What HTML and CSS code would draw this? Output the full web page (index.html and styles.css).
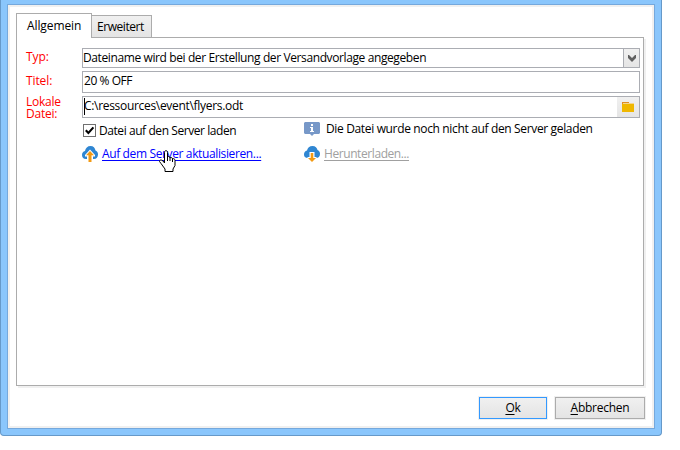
FILE: index.html
```
<!DOCTYPE html>
<html lang="de">
<head><meta charset="utf-8"><title>Datei</title><link rel="stylesheet" href="styles.css"></head>
<body>
<main class="window">
  <div class="client">
    <nav class="tabs">
      <span class="tab active">Allgemein</span>
      <span class="tab">Erweitert</span>
    </nav>
    <section class="panel">
      <div class="row row-type">
        <label class="label">Typ:</label>
        <div class="field select"><span class="type-text">Dateiname wird bei der Erstellung der Versandvorlage angegeben</span>
          <span class="drop"><svg width="8" height="7" viewBox="0 0 8 7"><path d="M0 0h1l3 3 3-3h1v3L4 7 0 3z" fill="#606060"/></svg></span>
        </div>
      </div>
      <div class="row row-title">
        <label class="label">Titel:</label>
        <div class="field"><span class="title-text">20 % OFF</span></div>
      </div>
      <div class="row row-file">
        <label class="label two">Lokale Datei:</label>
        <div class="field file"><i class="caret"></i><span class="path-text">C:\ressources\event\flyers.odt</span>
          <span class="browse"><svg width="13" height="12" viewBox="0 0 13 12"><path d="M0 1h7v2H0z" fill="#df8e27"/><path d="M1 2h11v2H1z" fill="#f5d58c"/><path d="M0 3h12v8H0z" fill="#efb700"/></svg></span>
        </div>
      </div>
      <div class="options">
        <div class="option"><span class="check"><svg width="11" height="11" viewBox="0 0 11 11"><path d="M1.800 5.200L4.400 8 9.400 2.400" fill="none" stroke="#000" stroke-width="2.100"/></svg></span><span class="load-text">Datei auf den Server laden</span></div>
        <div class="option info"><svg width="16" height="14" viewBox="0 0 16 14"><path d="M1 0h14l1 1v10l-1 1h-5l-2 2-2-2H1l-1-1V1z" fill="#7798c8"/><path d="M7 2h2v2H7zM6 5h3v4h1v1H6V9h1V6H6z" fill="#fff"/></svg><span class="info-text">Die Datei wurde noch nicht auf den Server geladen</span></div>
        <div class="option link-row"><svg width="16" height="16" viewBox="0 0 16 16"><path d="M4 13C1 13 0 11 0 9c0-2 1-3.500 3-4C3.500 2 5.500 0 8.500 0c3 0 4.500 2 5 4.500C15.500 5 16 7 16 8.500c0 2.500-1.500 4.500-4 4.500z" fill="#2f86d2"/><path d="M8 3.500L13 9v1.500h-2V14H5v-3.500H3V9z" fill="#fff"/><path d="M8 5l4 4.200H9.500V16h-3V9.200H4z" fill="#f39a13"/></svg><a class="update-text">Auf dem Server aktualisieren...</a></div>
        <div class="option link-row disabled"><svg width="16" height="16" viewBox="0 0 16 16"><path d="M4 12C1 12 0 10.500 0 8.500c0-2 1-3.500 3-4C3.500 2 5.500 0 8.500 0c3 0 4.500 2 5 4C15.500 4.500 16 6.500 16 8c0 2.500-1.500 4-4 4z" fill="#2f86d2"/><path d="M5.500 6h5v5h2v2L8 16l-4.500-3v-2h2z" fill="#fff"/><path d="M6.700 7h2.600v5H12l-4 4-4-4h2.700z" fill="#f39a13"/></svg><a class="download-text">Herunterladen...</a></div>
      </div>
    </section>
    <footer class="actions">
      <button class="button ok"><u>O</u>k</button>
      <button class="button cancel"><u>A</u>bbrechen</button>
    </footer>
  </div>
</main>
<svg class="cursor" width="17" height="22" viewBox="0 0 17 22"><path d="M5.500 13V2.500c0-2.500 3-2.500 3 0V7c1-1 2.500-.5 2.500 1 1-1 2.500-.5 2.500 1 1-.8 2.500-.2 2.500 1.500v5L14 19v2.500H6V19l-4-5.500-1.500-2c0-1.800 2-2 3.500-.5z" fill="#fff" stroke="#000"/><path d="M8.500 6v5M11 7.500V11M13.500 9v3" stroke="#000"/></svg>
</body>
</html>
```
FILE: styles.css
```
* { box-sizing: border-box; }
body { margin: 0; background: #fff; font: 12px/16px "Open Sans", sans-serif; color: #000; height: 450px; overflow: hidden; position: relative; }
svg { display: block; flex: none; }
.window { width: 662px; height: 436px; background: #8ac6fc; border: 1px solid #6699c9; border-top: 0; border-radius: 0 0 4px 4px; padding: 4px 6px 6px; }
.client { height: 425px; border: 1px solid #75a8dc; background: #fff; box-shadow: inset 0 0 0 2px #f0f0f0; padding: 8px 10px 0 8px; display: flex; flex-direction: column; }
.tabs { display: flex; align-items: flex-end; height: 25px; position: relative; z-index: 1; }
.tab { height: 23px; width: 60px; border: 1px solid #acacac; border-left: 0; background: linear-gradient(#f0f0f0, #e4e4e4); padding: 3px 0 0 5px; letter-spacing: -.45px; white-space: nowrap; }
.tab.active { width: 76px; height: 25px; border-left: 1px solid #acacac; border-right: 1px solid #acacac; border-bottom: 0; background: #fff; padding: 4px 0 0 10px; letter-spacing: -.1px; }
.panel { width: 628px; height: 349px; margin-top: -1px; border: 1px solid #acacac; box-shadow: 2px 2px 0 #f0f0f0; padding: 10px 3px 0 9px; }
.row { display: flex; }
.row-type { height: 23px; }
.row-title { height: 25px; }
.row-file { height: 24px; }
.label { width: 56px; color: #f00; letter-spacing: -.1px; padding-top: 1px; }
.row-title .label { padding-top: 2px; }
.label.two { line-height: 12px; padding: 0 12px 0 0; letter-spacing: -.25px; }
.field { width: 558px; height: 22px; border: 1px solid #abadb3; padding: 1px 0 0 1px; display: flex; white-space: nowrap; }
.field.select { height: 20px; padding: 1px 0 0; }
.drop, .browse { margin-left: auto; background: linear-gradient(#f0f0f0, #e5e5e5); display: flex; align-items: center; justify-content: center; }
.drop { width: 16px; height: 18px; margin-top: -1px; border-left: 1px solid #abadb3; }
.browse { width: 22px; height: 20px; margin-top: -1px; }
.caret { width: 1px; height: 17px; background: #000; margin-right: -1px; }
.type-text { letter-spacing: -.39px; }
.title-text { letter-spacing: -.45px; }
.path-text { letter-spacing: -.31px; }
.options { display: grid; grid-template-columns: 222px 1fr; grid-template-rows: 24px 24px; margin: 1px 0 0 56px; }
.option { display: flex; align-items: flex-start; white-space: nowrap; }
.check { width: 13px; height: 13px; border: 1px solid #707070; margin: 3px 3px 0 1px; }
.load-text { letter-spacing: -.43px; padding-top: 2px; }
.info svg { margin: 1px 6px 0 0; }
.info-text { letter-spacing: -.35px; }
.link-row svg { margin: 1px 4px 0 0; }
.link-row a { padding-top: 1px; color: #00f; text-decoration: underline; text-underline-offset: 2px; }
.update-text { letter-spacing: -.37px; }
.disabled .download-text { color: #a0a0a0; letter-spacing: -.42px; }
.actions { display: flex; margin: 11px 0 0 463px; gap: 8px; }
.button { font: inherit; color: #000; height: 22px; padding: 0; border: 1px solid #acacac; background: linear-gradient(#f0f0f0, #e4e4e4); box-shadow: 0 0 0 1px #f0f0f0; letter-spacing: -.25px; flex: none; }
.ok { width: 68px; border-color: #3399ff; }
.cancel { width: 90px; }
.button u { text-underline-offset: 2px; }
.cursor { position: absolute; left: 159px; top: 150px; }
```
